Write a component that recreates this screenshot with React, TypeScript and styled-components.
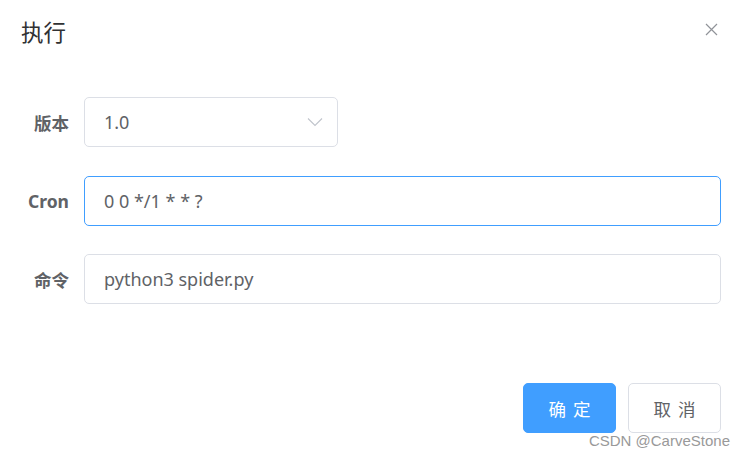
import React from 'react';
import styled, { createGlobalStyle } from 'styled-components';

const GlobalStyle = createGlobalStyle`
  html, body {
    margin: 0;
    padding: 0;
    background: #ffffff;
  }
  body {
    font-family: "Noto Sans", "Noto Sans CJK SC", sans-serif;
  }
  * {
    box-sizing: border-box;
  }
`;

const FIELDS = [
  { label: '版本', value: '1.0', kind: 'select' },
  { label: 'Cron', value: '0 0 */1 * * ?', kind: 'focused' },
  { label: '命令', value: 'python3 spider.py', kind: 'input' },
];

const App = () => {
  return (
    <>
      <GlobalStyle />
      <Dialog>
        <Header>
          <Title>执行</Title>
          <CloseBtn aria-label="close">
            <svg width="13" height="13" viewBox="0 0 13 13">
              <path d="M1 1L12 12M12 1L1 12" stroke="#909399" strokeWidth="1.2" fill="none" />
            </svg>
          </CloseBtn>
        </Header>
        <Body>
          {FIELDS.map((field) => (
            <FormRow key={field.label}>
              <Label>{field.label}</Label>
              {field.kind === 'select' ? (
                <SelectBox>
                  <InputText>{field.value}</InputText>
                  <svg width="16" height="10" viewBox="0 0 16 10">
                    <path d="M1 1.5L8 8.5L15 1.5" stroke="#C0C4CC" strokeWidth="1.1" fill="none" />
                  </svg>
                </SelectBox>
              ) : (
                <InputBox focused={field.kind === 'focused'}>
                  <InputText>{field.value}</InputText>
                </InputBox>
              )}
            </FormRow>
          ))}
        </Body>
        <Footer>
          <Button primary>确定</Button>
          <Button>取消</Button>
        </Footer>
        <Watermark>CSDN @CarveStone</Watermark>
      </Dialog>
    </>
  );
};

const Dialog = styled.div`
  position: relative;
  width: 745px;
  height: 456px;
  background: #ffffff;
  overflow: hidden;
`;

const Header = styled.div`
  display: flex;
  align-items: center;
  justify-content: space-between;
  padding: 16px 27px 0 21px;
  height: 46px;
`;

const Title = styled.span`
  font-family: "Noto Sans CJK SC", sans-serif;
  font-size: 22.5px;
  line-height: 30px;
  color: #303133;
`;

const CloseBtn = styled.button`
  display: flex;
  align-items: center;
  justify-content: center;
  width: 14px;
  height: 14px;
  padding: 0;
  margin-top: -3px;
  border: none;
  background: transparent;
  cursor: pointer;
`;

const Body = styled.div`
  display: flex;
  flex-direction: column;
  gap: 28.5px;
  padding: 51px 24px 0 24px;
`;

const FormRow = styled.div`
  display: flex;
  align-items: center;
  height: 50px;
`;

const Label = styled.label`
  width: 60px;
  padding-right: 15px;
  text-align: right;
  font-size: 17.5px;
  font-weight: 700;
  color: #606266;
`;

const InputBox = styled.div<{ focused?: boolean }>`
  flex: 1;
  display: flex;
  align-items: center;
  height: 50px;
  padding: 0 19px;
  border: 1px solid ${(props) => (props.focused ? '#409EFF' : '#DCDFE6')};
  border-radius: 5px;
  background: #ffffff;
`;

const SelectBox = styled.div`
  display: flex;
  align-items: center;
  justify-content: space-between;
  width: 254px;
  height: 50px;
  padding: 0 14px 0 19px;
  border: 1px solid #DCDFE6;
  border-radius: 5px;
  background: #ffffff;
  cursor: pointer;
`;

const InputText = styled.span`
  font-size: 18px;
  color: #606266;
  white-space: pre;
`;

const Footer = styled.div`
  display: flex;
  justify-content: flex-end;
  gap: 12px;
  padding: 79px 24px 0 24px;
`;

const Button = styled.button<{ primary?: boolean }>`
  width: 93px;
  height: 50px;
  padding: 0 0 0 7px;
  border: 1px solid ${(props) => (props.primary ? '#409EFF' : '#DCDFE6')};
  border-radius: 5px;
  background: ${(props) => (props.primary ? '#409EFF' : '#ffffff')};
  color: ${(props) => (props.primary ? '#ffffff' : '#606266')};
  font-family: "Noto Sans CJK SC", sans-serif;
  font-size: 17.5px;
  letter-spacing: 7px;
  cursor: pointer;
`;

const Watermark = styled.span`
  position: absolute;
  right: 15px;
  bottom: 7px;
  font-family: "Liberation Sans", Arial, sans-serif;
  font-size: 15px;
  color: #999999;
  pointer-events: none;
`;

export default App;
